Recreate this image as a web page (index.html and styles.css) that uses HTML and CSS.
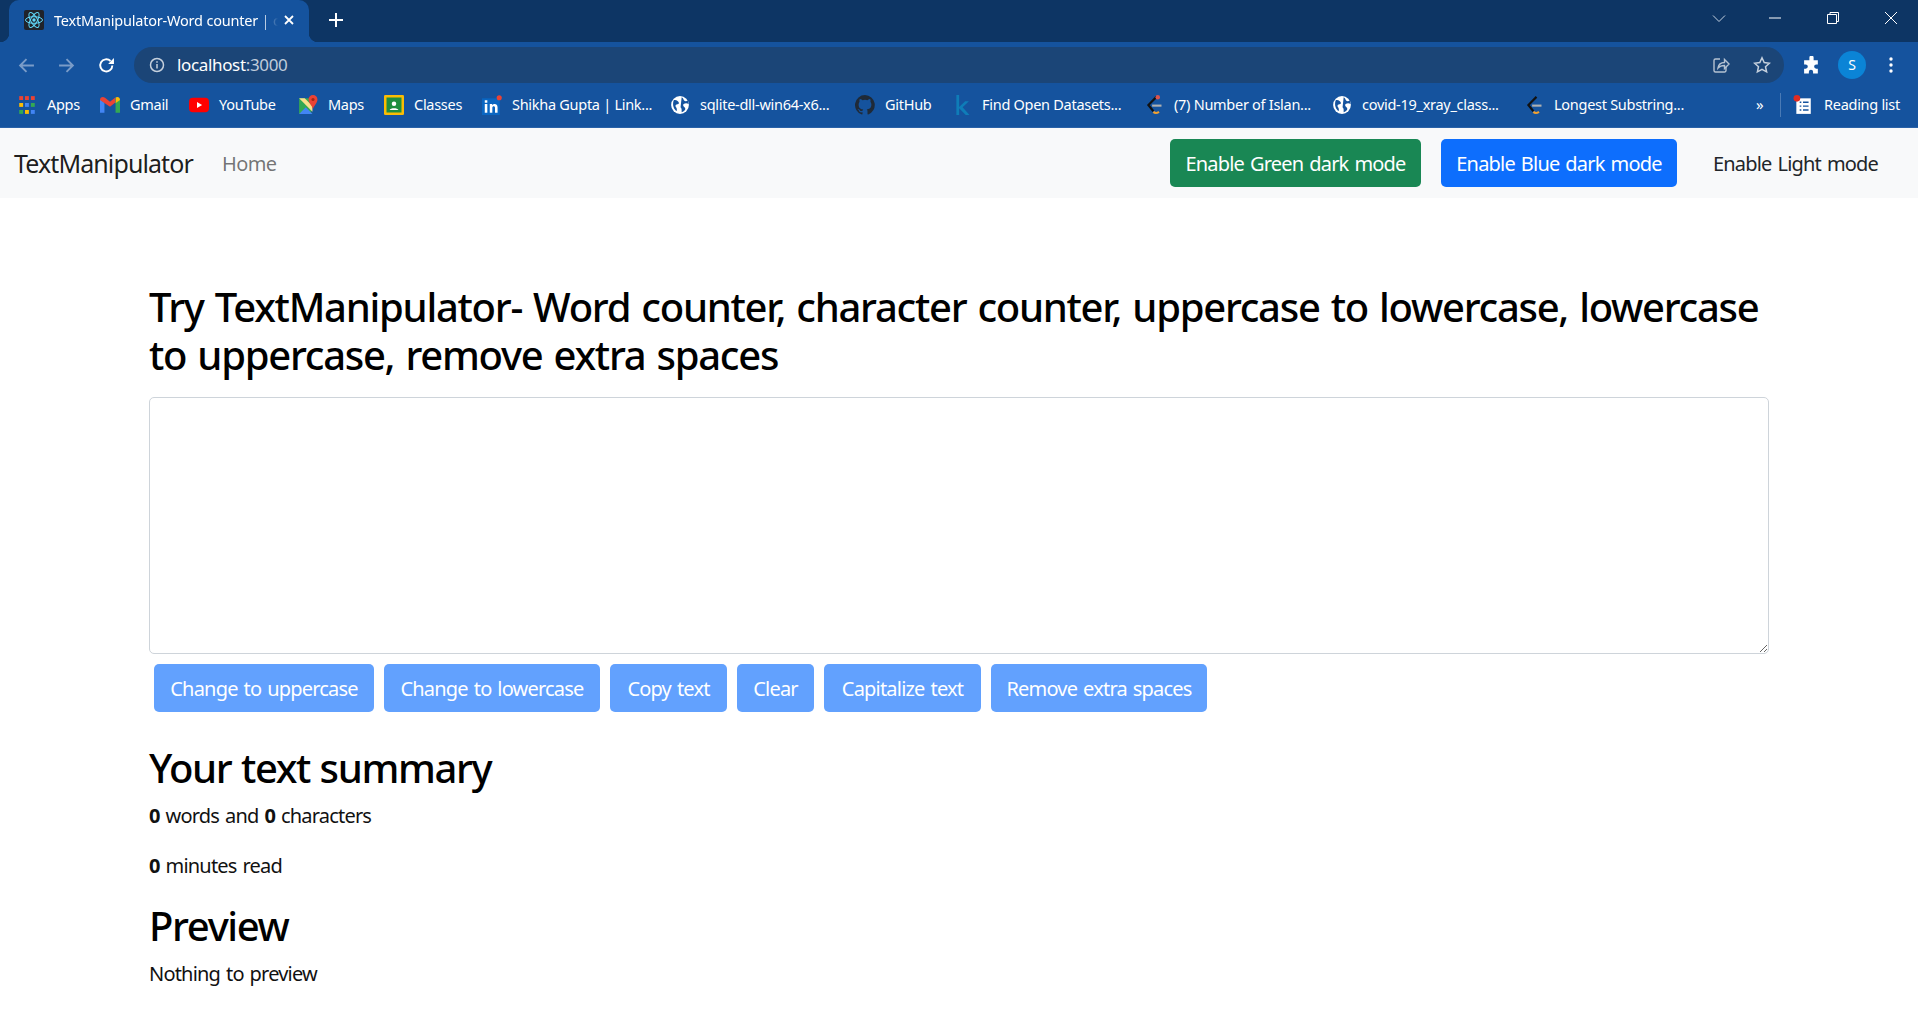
FILE: index.html
```html
<!doctype html>
<html>
<head>
<meta charset="utf-8">
<title>TextManipulator-Word counter</title>
<link rel="stylesheet" href="styles.css">
</head>

<body>
<!-- browser chrome -->
<div class="tabstrip">
	<div class="tab">
		<svg class="favicon" viewBox="0 0 20 20">
			<rect width="20" height="20" rx="2" fill="#20232a"/>
			<g fill="none" stroke="#61dafb" stroke-width="1">
				<ellipse cx="10" cy="10" rx="8.5" ry="3.3"/>
				<ellipse cx="10" cy="10" rx="8.5" ry="3.3" transform="rotate(60 10 10)"/>
				<ellipse cx="10" cy="10" rx="8.5" ry="3.3" transform="rotate(120 10 10)"/>
			</g>
			<circle cx="10" cy="10" r="1.7" fill="#61dafb"/>
		</svg>
		<span class="tab-title">TextManipulator-Word counter | c</span>
		<svg class="tab-close" viewBox="0 0 10 10"><path d="M1 1l8 8M9 1l-8 8" stroke="#fff" stroke-width="1.8"/></svg>
	</div>
	<svg class="new-tab" viewBox="0 0 14 14"><path d="M7 0v14M0 7h14" stroke="#fff" stroke-width="2"/></svg>
	<div class="win-btns">
		<svg class="win-icon win-chevron" viewBox="0 0 14 14"><path d="M1 4.500l6 6 6-6" fill="none" stroke="#c6d3e2" stroke-width="1"/></svg>
		<svg class="win-icon" viewBox="0 0 14 14"><path d="M1 7h12" stroke="#fff" stroke-width="1"/></svg>
		<svg class="win-icon" viewBox="0 0 14 14"><path d="M1.500 3.500h9v9h-9zM4 3.500v-2h8.500v9h-2" fill="none" stroke="#fff" stroke-width="1"/></svg>
		<svg class="win-icon" viewBox="0 0 14 14"><path d="M1 1l12 12M13 1l-12 12" stroke="#fff" stroke-width="1"/></svg>
	</div>
</div>

<div class="toolbar">
	<svg class="tool-icon" viewBox="0 0 16 16"><path d="M15 8H2M8 2L2 8l6 6" fill="none" stroke="#7a9cc8" stroke-width="1.800"/></svg>
	<svg class="tool-icon" viewBox="0 0 16 16"><path d="M1 8h13M8 2l6 6-6 6" fill="none" stroke="#7a9cc8" stroke-width="1.800"/></svg>
	<svg class="tool-icon tool-reload" viewBox="0 0 16 16"><path d="M13.500 8A5.700 5.700 0 1 1 11.800 3.800" fill="none" stroke="#fff" stroke-width="1.800"/><path d="M9.500 6.500H15V1z" fill="#fff"/></svg>
	<div class="omnibox">
		<svg class="info-icon" viewBox="0 0 16 16"><circle cx="8" cy="8" r="6.500" fill="none" stroke="#c5d0dd" stroke-width="1.500"/><path d="M8 7v4.500M8 4.200v1.600" stroke="#c5d0dd" stroke-width="1.500"/></svg>
		<span class="url">localhost<span class="url-dim">:3000</span></span>
		<svg class="share-icon" viewBox="0 0 18 18"><path d="M8 3H3.500A1.500 1.500 0 0 0 2 4.500v10A1.500 1.500 0 0 0 3.500 16h9a1.500 1.500 0 0 0 1.500-1.500V11" fill="none" stroke="#b5c2d2" stroke-width="1.400"/><path d="M6 12c.5-3.500 3-5.500 6.500-5.500V3.500L17 8l-4.500 4.500V9.500c-2.500 0-5 .8-6.500 2.500z" fill="none" stroke="#b5c2d2" stroke-width="1.400"/></svg>
		<svg class="star-icon" viewBox="0 0 18 18"><path d="M9 1.800l2.200 4.800 5.200.6-3.900 3.500 1.100 5.200L9 13.300l-4.600 2.600 1.100-5.200-3.900-3.500 5.200-.6z" fill="none" stroke="#c5d0dd" stroke-width="1.500"/></svg>
	</div>
	<svg class="puzzle-icon" viewBox="0 0 18 18"><path d="M7 1.500a2 2 0 0 1 4 0V4h4v4h-1.500a2 2 0 0 0 0 4H15v4.500h-4.500V15a2 2 0 0 0-4 0v1.500H2V12h1.500a2 2 0 0 0 0-4H2V4h5z" fill="#fff"/></svg>
	<div class="avatar">S</div>
	<svg class="dots-icon" viewBox="0 0 4 16"><circle cx="2" cy="2" r="1.700" fill="#fff"/><circle cx="2" cy="8" r="1.700" fill="#fff"/><circle cx="2" cy="14" r="1.700" fill="#fff"/></svg>
</div>

<div class="bookmarks">
	<div class="bm">
		<svg class="bm-icon" viewBox="-1 -1 18 18">
			<path d="M1 0h3.500v3.500H1z" fill="#ea4335"/><path d="M6.200 0h3.500v3.500H6.200z" fill="#ea4335"/><path d="M11.500 0H15v3.500h-3.500z" fill="#ea4335"/>
			<path d="M1 6.200h3.500v3.500H1z" fill="#fbbc04"/><path d="M6.200 6.200h3.500v3.500H6.200z" fill="#4285f4"/><path d="M11.500 6.200H15v3.500h-3.500z" fill="#34a853"/>
			<path d="M1 12.500h3.500V16H1z" fill="#34a853"/><path d="M6.200 12.500h3.500V16H6.200z" fill="#fbbc04"/><path d="M11.500 12.500H15V16h-3.500z" fill="#4285f4"/>
		</svg>
		<span>Apps</span>
	</div>
	<div class="bm">
		<svg class="bm-icon" viewBox="0 0 18 18">
			<path d="M0 16V4l4 3v9z" fill="#4285f4"/><path d="M14 16V7l4-3v12z" fill="#34a853"/>
			<path d="M0 4.500C0 2 2.500 1 4.500 2.500L9 6l4.500-3.500v4.500L9 10.500 0 4.500z" fill="#ea4335"/>
			<path d="M14 2.300c1.800-1.300 4-.3 4 2.200l-4 3z" fill="#fbbc04"/>
		</svg>
		<span>Gmail</span>
	</div>
	<div class="bm">
		<svg class="bm-icon" viewBox="0 0 18 18"><rect x="0" y="2.500" width="18" height="13" rx="3.500" fill="#f00"/><path d="M7.200 6.200l4.600 2.800-4.600 2.800z" fill="#fff"/></svg>
		<span>YouTube</span>
	</div>
	<div class="bm">
		<svg class="bm-icon" viewBox="0 0 18 18">
			<path d="M1 3h11v14H1z" fill="#34a853"/><path d="M1 17l6-6 6 6z" fill="#4285f4"/><path d="M1 3l12 12v-5L6 3z" fill="#fbe08c"/>
			<path d="M13.500 0a4 4 0 0 1 4 4c0 3-2.800 5-4 8.500C12.300 9 9.500 7 9.500 4a4 4 0 0 1 4-4z" fill="#ea4335"/>
			<circle cx="13.500" cy="4" r="1.400" fill="#a52714"/>
		</svg>
		<span>Maps</span>
	</div>
	<div class="bm">
		<svg class="bm-icon" viewBox="0 0 16 16"><rect width="16" height="16" rx="1" fill="#fbbc04"/><rect x="2" y="2" width="12" height="12" fill="#1e8e3e"/><circle cx="8" cy="7" r="1.800" fill="#fff"/><path d="M4.500 12c.5-2 6.500-2 7 0z" fill="#fff"/></svg>
		<span>Classes</span>
	</div>
	<div class="bm">
		<svg class="bm-icon" viewBox="0 0 18 18">
			<rect y="3" width="16" height="15" fill="#0a66c2"/>
			<path d="M2.500 8h2.300v8H2.500zM2.500 4.800h2.300V7H2.500zM7 8h2.200v1.200c1.200-1.800 4.800-1.800 4.800 1.800v5h-2.300v-4.500c0-1.800-2.400-1.800-2.400 0V16H7z" fill="#fff"/>
			<circle cx="15.500" cy="2.500" r="2.300" fill="#ea4335"/>
		</svg>
		<span>Shikha Gupta | Link...</span>
	</div>
	<div class="bm">
		<svg class="bm-icon" viewBox="-1 -1 18 18"><use href="#globe"/></svg>
		<span>sqlite-dll-win64-x6...</span>
	</div>
	<div class="bm">
		<svg class="bm-icon" viewBox="0 0 16 16"><path d="M8 0a8 8 0 0 0-2.500 15.600c.4.100.5-.2.500-.4v-1.400c-2.200.5-2.700-1-2.700-1-.4-.9-.9-1.200-.9-1.200-.7-.5.100-.5.100-.5.800.1 1.200.8 1.200.8.700 1.200 1.900.9 2.300.7.100-.5.300-.9.500-1.100-1.800-.2-3.600-.9-3.600-4 0-.9.300-1.600.8-2.100-.1-.2-.4-1 .1-2.100 0 0 .7-.2 2.200.8a7.500 7.500 0 0 1 4 0c1.500-1 2.200-.8 2.200-.8.400 1.100.2 1.900.1 2.100.5.600.8 1.300.8 2.100 0 3.100-1.900 3.700-3.700 3.900.3.300.6.800.6 1.500v2.200c0 .2.100.5.600.4A8 8 0 0 0 8 0z" fill="#1f2a38"/></svg>
		<span>GitHub</span>
	</div>
	<div class="bm">
		<svg class="bm-icon" viewBox="0 0 16 16"><path d="M3.500 0h2.200v9.500L10.500 5h3l-5 4.800L14 16h-3L5.700 10.500V16H3.500z" fill="#0f7db8"/></svg>
		<span>Find Open Datasets...</span>
	</div>
	<div class="bm">
		<svg class="bm-icon" viewBox="0 0 16 16"><use href="#leet"/><circle cx="11" cy="1.800" r="1.800" fill="#d9534f"/></svg>
		<span>(7) Number of Islan...</span>
	</div>
	<div class="bm">
		<svg class="bm-icon" viewBox="-1 -1 18 18"><use href="#globe"/></svg>
		<span>covid-19_xray_class...</span>
	</div>
	<div class="bm">
		<svg class="bm-icon" viewBox="0 0 16 16"><use href="#leet"/></svg>
		<span>Longest Substring...</span>
	</div>
	<span class="bm-more">»</span>
	<div class="bm bm-reading">
		<svg class="bm-icon" viewBox="0 0 18 18">
			<path d="M3 3h13v14H3z" fill="#fff"/><path d="M6 6.500h1.500M9 6.500h5M6 10h1.500M9 10h5M6 13.500h1.500M9 13.500h5" stroke="#15539e" stroke-width="1.300"/>
			<circle cx="3.500" cy="3" r="3" fill="#e02b20"/>
		</svg>
		<span>Reading list</span>
	</div>
</div>

<svg class="defs">
	<defs>
		<g id="globe">
			<circle cx="8" cy="8" r="8" fill="#fff"/>
			<path d="M2.500 3.500C5 3 6.500 4.500 7 6c.3 1-1 1.500-2 1.500S3.500 9 4.500 10c.5.700 1 2 .5 3.500C3 12.500.5 8 2.500 3.500zM9.500 1c2 1 1.500 3 3 3.500.8.300 1.500.2 2.500-.5.500 1 .8 2 .8 3-1.500-.5-3-.8-4.500.2-1 .7-.2 2.300.7 2.800.8.500 1 1.500.5 2.500-1 1-2 1.700-3 2-.2-1.500.5-3-1-4.500" fill="#15539e"/>
		</g>
		<g id="leet" fill="none" stroke-width="1.700">
			<path d="M10 1.500L3.500 8l4 5" stroke="#111"/>
			<path d="M7.500 13.500c1.500 1.500 3 1 4.500 0" stroke="#f0a030"/>
			<path d="M6.500 8.500H14" stroke="#b0b0b0"/>
		</g>
	</defs>
</svg>

<!-- page -->
<nav class="navbar">
	<a class="brand">TextManipulator</a>
	<a class="nav-home">Home</a>
	<div class="nav-right">
		<button class="btn btn-green">Enable Green dark mode</button>
		<button class="btn btn-blue">Enable Blue dark mode</button>
		<button class="btn btn-plain">Enable Light mode</button>
	</div>
</nav>

<div class="container">
	<h2 class="title">Try TextManipulator- Word counter, character counter, uppercase to lowercase, lowercase to uppercase, remove extra spaces</h2>
	<textarea class="text-box"></textarea>
	<div class="actions">
		<button class="btn btn-off">Change to uppercase</button>
		<button class="btn btn-off">Change to lowercase</button>
		<button class="btn btn-off">Copy text</button>
		<button class="btn btn-off">Clear</button>
		<button class="btn btn-off">Capitalize text</button>
		<button class="btn btn-off">Remove extra spaces</button>
	</div>
	<h2 class="sub">Your text summary</h2>
	<p><b>0</b> words and <b>0</b> characters</p>
	<p><b>0</b> minutes read</p>
	<h2 class="sub sub-preview">Preview</h2>
	<p>Nothing to preview</p>
</div>
</body>
</html>
```

FILE: styles.css
```css
*{margin:0;padding:0;box-sizing:border-box;}
body{font-family:"Noto Sans","Open Sans",sans-serif;color:#212529;background:#fff;font-size:20px;line-height:30px;overflow:hidden;}

/* browser chrome */
.tabstrip{display:flex;align-items:center;height:42px;background:#0d3564;padding-left:9px;}
.tab{position:relative;display:flex;align-items:center;width:300px;height:42px;background:#15539e;border-radius:10px 10px 0 0;padding:0 0 2px 15px;}
.tab::before,.tab::after{content:"";position:absolute;bottom:0;width:9px;height:9px;}
.tab::before{left:-9px;background:radial-gradient(circle at 0 0,transparent 9px,#15539e 9.500px);}
.tab::after{right:-9px;background:radial-gradient(circle at 100% 0,transparent 9px,#15539e 9.500px);}
.favicon{width:20px;height:20px;flex:none;}
.tab-title{width:224px;margin-left:10px;padding-bottom:1px;font-size:14.500px;letter-spacing:-.2px;color:#fff;line-height:20px;white-space:nowrap;-webkit-mask-image:linear-gradient(to right,#000 92%,transparent 100%);mask-image:linear-gradient(to right,#000 92%,transparent 100%);}
.tab-close{width:10px;height:10px;margin-left:6px;flex:none;}
.new-tab{width:14px;height:14px;margin:0 0 2px 20px;}
.win-btns{display:flex;align-items:center;gap:44px;margin:0 0 6px auto;padding-right:20px;}
.win-icon{width:14px;height:14px;}
.win-chevron{margin-right:-2px;}

.toolbar{display:flex;align-items:center;height:42px;background:#15539e;padding:4px 18px 0 18px;}
.tool-icon{width:17px;height:17px;margin-right:23px;flex:none;}
.tool-reload{margin-right:19px;}
.omnibox{display:flex;align-items:center;width:1650px;height:36px;background:#1b4577;border-radius:18px;padding-left:15px;}
.info-icon{width:16px;height:16px;flex:none;}
.url{margin-left:12px;font-size:17px;letter-spacing:-.35px;line-height:20px;color:#fff;}
.url-dim{color:#c0ccdb;}
.share-icon{width:18px;height:18px;margin-left:auto;}
.star-icon{width:18px;height:18px;margin-left:23px;margin-right:13px;}
.puzzle-icon{width:19px;height:19px;margin-left:18px;flex:none;}
.avatar{width:28px;height:28px;margin-left:17px;border-radius:50%;background:#0b84d6;color:#fff;font-size:14px;line-height:28px;text-align:center;flex:none;}
.dots-icon{width:4px;height:16px;margin-left:23px;flex:none;}

.bookmarks{display:grid;grid-template-columns:83px 89px 109px 86px 98px 188px 185px 97px 192px 188px 192px 231px 25px 1fr;align-items:center;height:44px;background:#15539e;padding:0 0 2px 17px;border-bottom:1px solid #2a62a8;}
.bm{display:flex;align-items:center;gap:10px;font-size:14.500px;letter-spacing:-.28px;line-height:20px;color:#fff;white-space:nowrap;}
.bm span{padding-bottom:2px;}
.bm-icon{width:20px;height:20px;flex:none;}
.bm-more{color:#fff;font-size:15px;line-height:20px;padding:0 0 2px 1px;}
.bm-reading{border-left:1px solid #4a7ab5;height:24px;padding-left:12px;gap:11px;}
.defs{position:absolute;width:0;height:0;}

/* page */
.navbar{display:flex;align-items:center;height:70px;background:#f8f9fa;padding:0 0 0 14px;}
.brand{font-size:25px;letter-spacing:-.9px;line-height:37px;color:rgba(0,0,0,.9);}
.nav-home{margin:2px 0 0 29px;letter-spacing:-.55px;color:rgba(0,0,0,.55);}
.nav-right{display:flex;gap:20px;margin-left:auto;padding-right:24px;}
.btn{height:48px;padding:2px 0 0;border:1px solid transparent;border-radius:5px;font:inherit;letter-spacing:-.8px;word-spacing:1.500px;color:#fff;background:none;white-space:nowrap;}
.btn-green{width:251px;background:#198754;}
.btn-blue{width:236px;background:#0d6efd;}
.btn-plain{width:197px;color:#212529;}
.btn-off{background:#62a1fe;}

.container{width:1620px;margin-left:149px;padding-top:85px;}
.title{font-size:40px;line-height:48px;font-weight:500;color:#000;word-spacing:2px;letter-spacing:-1.27px;}
.text-box{display:block;width:100%;height:257px;margin-top:18px;border:1px solid #ced4da;border-radius:5px;}
.actions{display:grid;grid-template-columns:220px 216px 117px 77px 157px 216px;gap:10px;margin:10px 0 0 5px;}
.sub{margin-top:32px;font-size:40px;line-height:48px;font-weight:500;color:#000;letter-spacing:-1.35px;word-spacing:.5px;}
.sub-preview{margin-top:21px;}
p{margin-bottom:13px;letter-spacing:-.8px;word-spacing:1.500px;color:#111;}
.sub + p{margin-top:9px;}
p + p{margin-top:20px;}
p b{font-weight:700;}
```
